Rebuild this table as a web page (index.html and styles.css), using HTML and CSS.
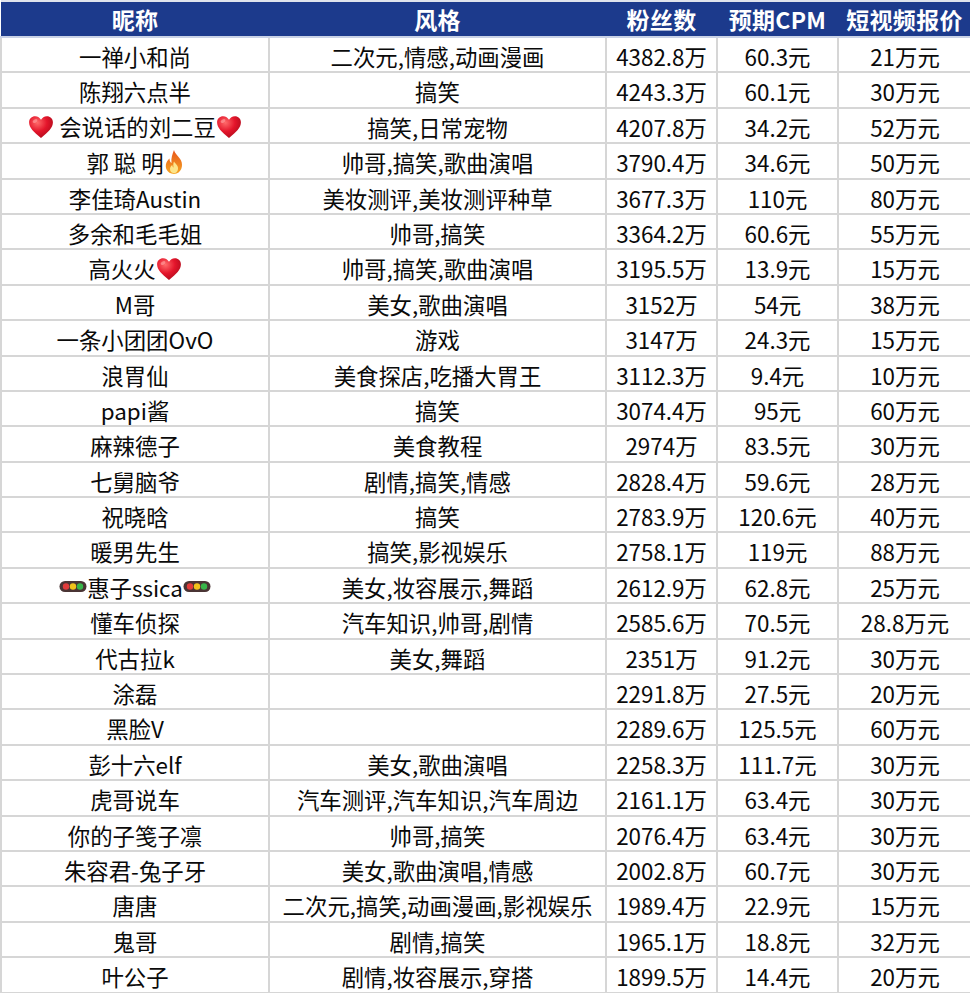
FILE: index.html
```html
<!DOCTYPE html>
<html lang="zh">
<head>
<meta charset="utf-8">
<link rel="stylesheet" href="styles.css">
</head>
<body>
<svg width="0" height="0" class="defs">
  <defs>
    <radialGradient id="hg" cx="0.35" cy="0.3" r="0.8">
      <stop offset="0" stop-color="#ff6a6a"/>
      <stop offset="0.5" stop-color="#e4152b"/>
      <stop offset="1" stop-color="#a80a1a"/>
    </radialGradient>
    <linearGradient id="fg" x1="0" y1="1" x2="0" y2="0">
      <stop offset="0" stop-color="#f5a623"/>
      <stop offset="1" stop-color="#e8541a"/>
    </linearGradient>
    <symbol id="heart" viewBox="0 0 24 22">
      <path d="M12 21.2C5.2 15.6 1 11.6 1 6.6 1 3.3 3.5 1 6.6 1 9 1 11 2.4 12 4.4 13 2.4 15 1 17.4 1 20.5 1 23 3.3 23 6.6 23 11.6 18.8 15.6 12 21.2Z" fill="url(#hg)"/>
      <ellipse cx="6.5" cy="5.5" rx="2.4" ry="1.5" fill="#ff9a9a" opacity="0.7" transform="rotate(-30 6.5 5.5)"/>
    </symbol>
    <symbol id="fire" viewBox="0 0 20 26">
      <path d="M10 1C11 5 15 7.5 17 11.5 19.5 16.5 17.5 24.5 10 25 2.5 24.5 0.5 18 2.5 13.5 3.3 11.7 4.5 10.5 5.5 9.5 5.5 12 6.5 13.5 7.5 14 6.8 9.5 8.5 4.5 10 1Z" fill="url(#fg)"/>
      <path d="M10 12.5C11.5 15 14.5 16.5 14 20 13.6 23 11.8 24.2 10 24.2 7.6 24.2 5.8 22.6 6 19.8 6.2 17.8 7.5 16.6 8.3 16 8.4 17.5 9 18.2 9.6 18.4 9 16 9.4 14 10 12.5Z" fill="#fde58a"/>
    </symbol>
    <symbol id="light" viewBox="0 0 28 12">
      <rect x="0.5" y="0.5" width="27" height="11" rx="5.5" fill="#4a3434"/>
      <circle cx="7" cy="6" r="3.2" fill="#e23b3b"/>
      <circle cx="14" cy="6" r="3.2" fill="#f2c21b"/>
      <circle cx="21" cy="6" r="3.2" fill="#39b54a"/>
    </symbol>
  </defs>
</svg>
<table class="sheet">
  <colgroup>
    <col class="c-name"><col class="c-style"><col class="c-fans"><col class="c-cpm"><col class="c-price">
  </colgroup>
  <thead>
    <tr><th>昵称</th><th>风格</th><th>粉丝数</th><th>预期CPM</th><th>短视频报价</th></tr>
  </thead>
  <tbody>
    <tr><td>一禅小和尚</td><td>二次元,情感,动画漫画</td><td>4382.8万</td><td>60.3元</td><td>21万元</td></tr>
    <tr><td>陈翔六点半</td><td>搞笑</td><td>4243.3万</td><td>60.1元</td><td>30万元</td></tr>
    <tr><td><svg class="emo heart"><use href="#heart"/></svg> 会说话的刘二豆<svg class="emo heart"><use href="#heart"/></svg></td><td>搞笑,日常宠物</td><td>4207.8万</td><td>34.2元</td><td>52万元</td></tr>
    <tr><td>郭 聪 明<svg class="emo fire"><use href="#fire"/></svg></td><td>帅哥,搞笑,歌曲演唱</td><td>3790.4万</td><td>34.6元</td><td>50万元</td></tr>
    <tr><td>李佳琦Austin</td><td>美妆测评,美妆测评种草</td><td>3677.3万</td><td>110元</td><td>80万元</td></tr>
    <tr><td>多余和毛毛姐</td><td>帅哥,搞笑</td><td>3364.2万</td><td>60.6元</td><td>55万元</td></tr>
    <tr><td>高火火<svg class="emo heart"><use href="#heart"/></svg></td><td>帅哥,搞笑,歌曲演唱</td><td>3195.5万</td><td>13.9元</td><td>15万元</td></tr>
    <tr><td>M哥</td><td>美女,歌曲演唱</td><td>3152万</td><td>54元</td><td>38万元</td></tr>
    <tr><td>一条小团团OvO</td><td>游戏</td><td>3147万</td><td>24.3元</td><td>15万元</td></tr>
    <tr><td>浪胃仙</td><td>美食探店,吃播大胃王</td><td>3112.3万</td><td>9.4元</td><td>10万元</td></tr>
    <tr><td>papi酱</td><td>搞笑</td><td>3074.4万</td><td>95元</td><td>60万元</td></tr>
    <tr><td>麻辣德子</td><td>美食教程</td><td>2974万</td><td>83.5元</td><td>30万元</td></tr>
    <tr><td>七舅脑爷</td><td>剧情,搞笑,情感</td><td>2828.4万</td><td>59.6元</td><td>28万元</td></tr>
    <tr><td>祝晓晗</td><td>搞笑</td><td>2783.9万</td><td>120.6元</td><td>40万元</td></tr>
    <tr><td>暖男先生</td><td>搞笑,影视娱乐</td><td>2758.1万</td><td>119元</td><td>88万元</td></tr>
    <tr><td><svg class="emo light"><use href="#light"/></svg>惠子ssica<svg class="emo light"><use href="#light"/></svg></td><td>美女,妆容展示,舞蹈</td><td>2612.9万</td><td>62.8元</td><td>25万元</td></tr>
    <tr><td>懂车侦探</td><td>汽车知识,帅哥,剧情</td><td>2585.6万</td><td>70.5元</td><td>28.8万元</td></tr>
    <tr><td>代古拉k</td><td>美女,舞蹈</td><td>2351万</td><td>91.2元</td><td>30万元</td></tr>
    <tr><td>涂磊</td><td></td><td>2291.8万</td><td>27.5元</td><td>20万元</td></tr>
    <tr><td>黑脸V</td><td></td><td>2289.6万</td><td>125.5元</td><td>60万元</td></tr>
    <tr><td>彭十六elf</td><td>美女,歌曲演唱</td><td>2258.3万</td><td>111.7元</td><td>30万元</td></tr>
    <tr><td>虎哥说车</td><td>汽车测评,汽车知识,汽车周边</td><td>2161.1万</td><td>63.4元</td><td>30万元</td></tr>
    <tr><td>你的子笺子凛</td><td>帅哥,搞笑</td><td>2076.4万</td><td>63.4元</td><td>30万元</td></tr>
    <tr><td>朱容君-兔子牙</td><td>美女,歌曲演唱,情感</td><td>2002.8万</td><td>60.7元</td><td>30万元</td></tr>
    <tr><td>唐唐</td><td>二次元,搞笑,动画漫画,影视娱乐</td><td>1989.4万</td><td>22.9元</td><td>15万元</td></tr>
    <tr><td>鬼哥</td><td>剧情,搞笑</td><td>1965.1万</td><td>18.8元</td><td>32万元</td></tr>
    <tr><td>叶公子</td><td>剧情,妆容展示,穿搭</td><td>1899.5万</td><td>14.4元</td><td>20万元</td></tr>
  </tbody>
</table>
</body>
</html>
```

FILE: styles.css
```css
html, body {
  margin: 0;
  padding: 0;
  background: #ffffff;
}
body {
  font-family: "Noto Sans CJK SC", "Noto Sans", sans-serif;
  color: #0a0a0a;
}
.defs {
  position: absolute;
  width: 0;
  height: 0;
  overflow: hidden;
}
.sheet {
  width: 970px;
  table-layout: fixed;
  border-collapse: collapse;
  border-top: 2px solid #dfe3ec;
}
.c-name { width: 268px; }
.c-style { width: 337px; }
.c-fans { width: 111px; }
.c-cpm { width: 121px; }
.c-price { width: 133px; }

.sheet th {
  height: 34px;
  padding: 0;
  background: #1c3a8c;
  color: #ffffff;
  font-weight: 700;
  font-size: 23px;
  line-height: 1;
  text-align: center;
  border: none;
  border-bottom: 2px solid #c9d2e6;
  letter-spacing: 0.3px;
}
.sheet td {
  height: 35.4px;
  padding: 3px 0 0 0;
  font-size: 22.4px;
  line-height: 1;
  text-align: center;
  white-space: nowrap;
  border: 2px solid #d6d6d6;
  box-sizing: border-box;
}
.sheet td:first-child { border-left: 2px solid #d6d6d6; }
.sheet td:last-child { border-right: none; }

.emo {
  display: inline-block;
  vertical-align: -3px;
}
.heart { width: 26px; height: 24px; }
.fire { width: 20px; height: 26px; vertical-align: -3px; }
.light { width: 28px; height: 13px; vertical-align: 4px; }
```
